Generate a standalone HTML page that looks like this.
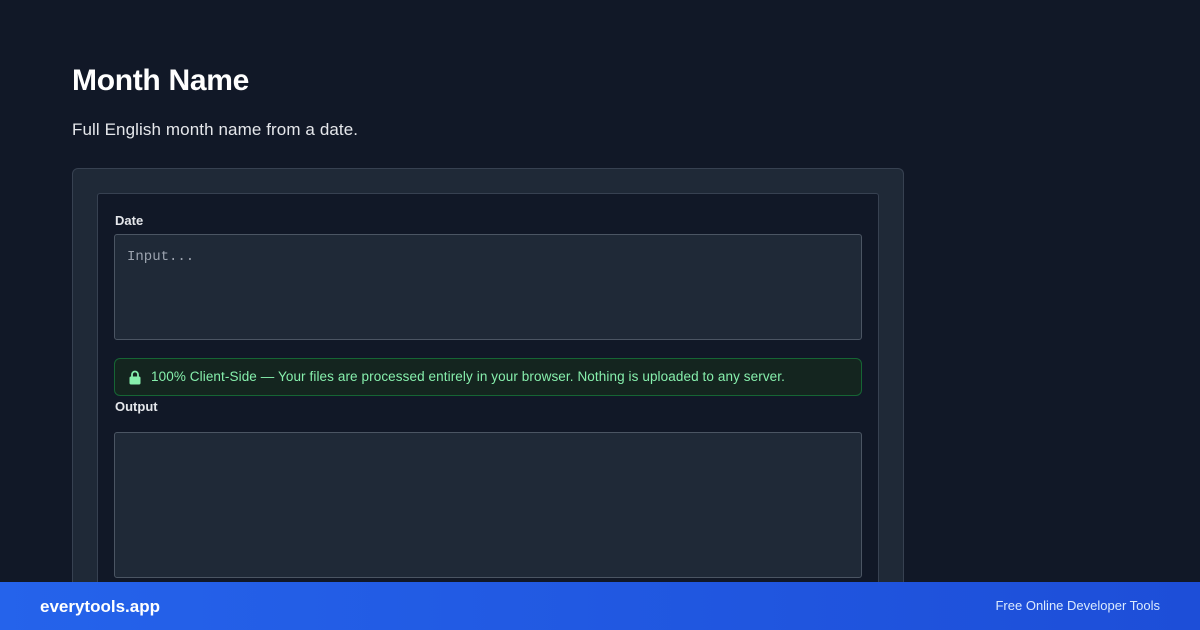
<!DOCTYPE html>
<html style="overflow:hidden;height:630px"><head><style>
body{margin:0;width:1200px;height:630px;background:#111827;font-family:"Liberation Sans",sans-serif;position:relative;overflow:hidden}
h1{position:absolute;left:72px;top:64px;margin:0;color:#fff;font-size:30px;font-weight:bold;letter-spacing:-0.3px}
.sub{position:absolute;left:72px;top:120px;color:#e5e7eb;font-size:17px;letter-spacing:0.1px}
.outer{position:absolute;left:72px;top:168px;width:830px;height:420px;background:#1f2937;border:1px solid #374151;border-bottom:none;border-radius:6px 6px 0 0}
.inner{position:absolute;left:24px;top:24px;width:780px;height:400px;background:#111827;border:1px solid #374151;border-bottom:none;border-radius:3px}
.lbl{position:absolute;left:17px;color:#e5e7eb;font-size:13px;font-weight:bold}
.ta{position:absolute;left:16px;width:746px;background:#1f2937;border:1px solid #4b5563;border-radius:3px}
.note{position:absolute;left:16px;top:164px;width:746px;height:36px;background:#14251f;border:1px solid #166534;border-radius:6px;color:#86efac;font-size:13.5px;line-height:36px;letter-spacing:0.1px}
.foot{position:absolute;left:0;top:582px;width:1200px;height:48px;background:linear-gradient(90deg,#2563eb,#1d4ed8)}
</style></head><body>
<h1>Month Name</h1>
<div class="sub">Full English month name from a date.</div>
<div class="outer"><div class="inner">
<div class="lbl" style="top:19px">Date</div>
<div class="ta" style="top:40px;height:104px"><span style="position:absolute;left:12px;top:14px;font-family:'Liberation Mono',monospace;font-size:14px;color:#9ca3af">Input...</span></div>
<div class="note"><svg style="position:absolute;left:14px;top:11px" width="12" height="15" viewBox="0 0 12 15"><path d="M3 7V4.5a3 3 0 0 1 6 0V7" fill="none" stroke="#86efac" stroke-width="1.8"/><rect x="0.5" y="6.5" width="11" height="8" rx="1.5" fill="#86efac"/></svg><span style="position:absolute;left:36px">100% Client-Side — Your files are processed entirely in your browser. Nothing is uploaded to any server.</span></div>
<div class="lbl" style="top:205px">Output</div>
<div class="ta" style="top:238px;height:144px"></div>
</div></div>
<div class="foot"><span style="position:absolute;left:40px;top:15px;color:#fff;font-weight:bold;font-size:17px">everytools.app</span><span style="position:absolute;right:40px;top:16px;color:#dbeafe;font-size:13px">Free Online Developer Tools</span></div>
</body></html>
